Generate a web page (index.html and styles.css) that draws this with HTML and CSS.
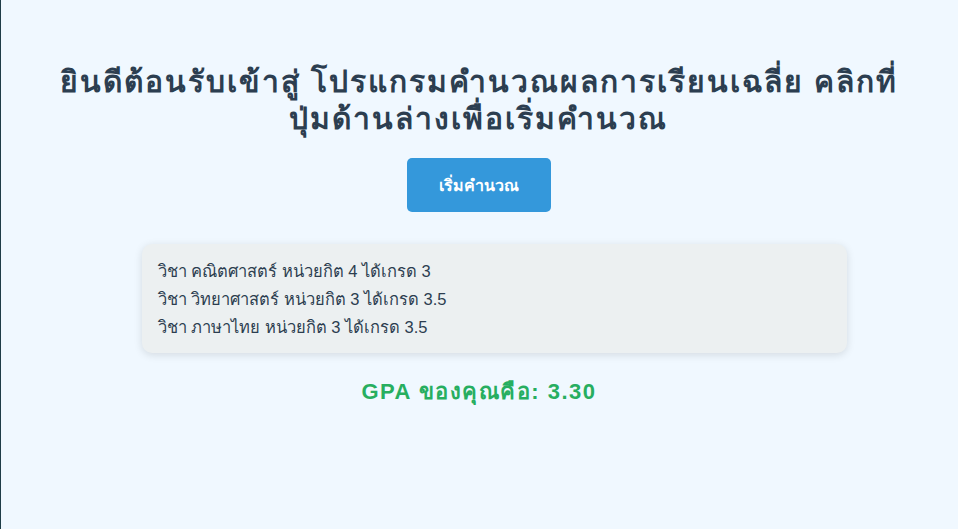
FILE: index.html
```html
<!DOCTYPE html>
<html lang="th">
<head>
<meta charset="utf-8">
<title>GPA</title>
<link rel="stylesheet" href="styles.css">
</head>
<body>
<main class="page">
  <h1 class="title">ยินดีต้อนรับเข้าสู่ โปรแกรมคำนวณผลการเรียนเฉลี่ย คลิกที่<br>ปุ่มด้านล่างเพื่อเริ่มคำนวณ</h1>
  <button class="start">เริ่มคำนวณ</button>
  <div class="list">
    <p class="row">วิชา คณิตศาสตร์ หน่วยกิต 4 ได้เกรด 3</p>
    <p class="row">วิชา วิทยาศาสตร์ หน่วยกิต 3 ได้เกรด 3.5</p>
    <p class="row">วิชา ภาษาไทย หน่วยกิต 3 ได้เกรด 3.5</p>
  </div>
  <p class="gpa">GPA ของคุณคือ: 3.30</p>
</main>
</body>
</html>
```
FILE: styles.css
```css
html {
  min-height: 100%;
  box-shadow: inset 1px 0 0 #1f3d47;
}
body {
  margin: 0;
  background: #f0f8ff;
  font-family: Tahoma, "Liberation Sans", "Noto Sans", sans-serif;
  color: #2c3e50;
}
.page {
  display: flex;
  flex-direction: column;
  align-items: center;
  padding: 63px 20px 40px;
}
.title {
  margin: 0;
  text-align: center;
  font-size: 30px;
  line-height: 37px;
  letter-spacing: 2px;
  font-weight: bold;
  color: #2c3e50;
}
.start {
  margin-top: 21px;
  width: 144px;
  height: 54px;
  border: none;
  border-radius: 5px;
  background: #3498db;
  color: #fff;
  font-family: inherit;
  font-size: 16px;
  font-weight: bold;
}
.list {
  margin-top: 32px;
  margin-left: 30px;
  width: 705px;
  box-sizing: border-box;
  padding: 13px 16px 12px;
  background: #ecf0f1;
  border-radius: 10px;
  box-shadow: 0 2px 8px rgba(0, 0, 0, 0.12);
}
.row {
  margin: 0;
  font-size: 16.5px;
  line-height: 28px;
  color: #2c3e50;
}
.gpa {
  margin: 21px 0 0;
  font-size: 22px;
  letter-spacing: 1.5px;
  font-weight: bold;
  color: #27ae60;
}
```
